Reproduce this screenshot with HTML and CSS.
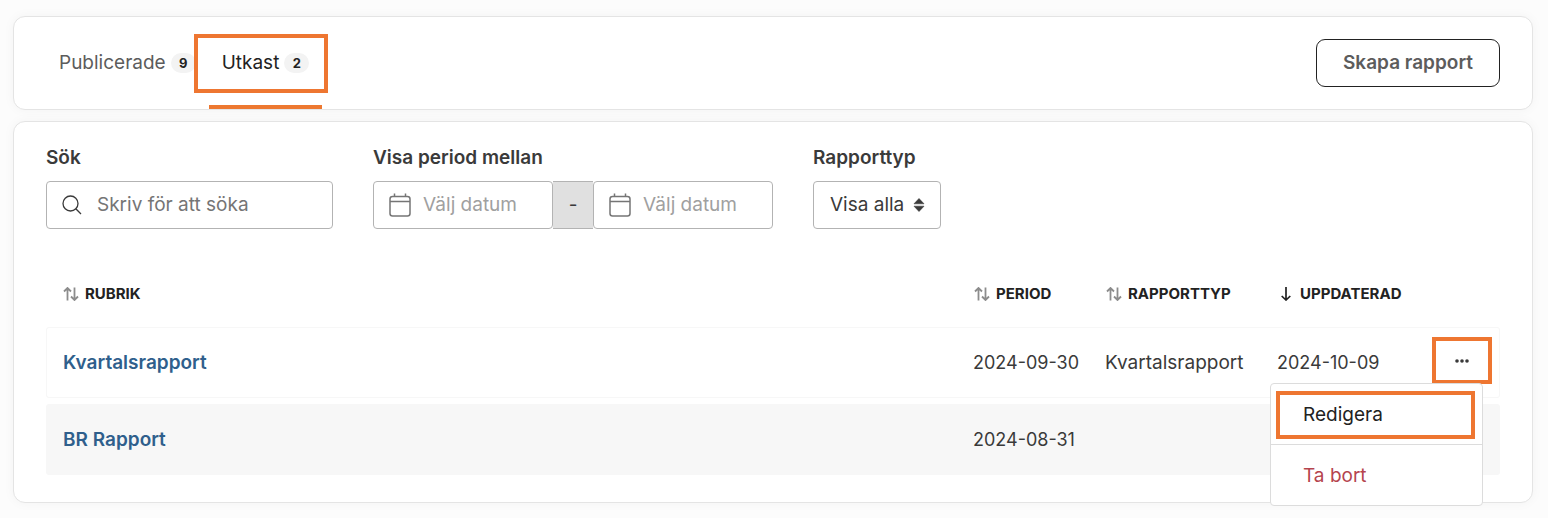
FILE: index.html
```html
<!DOCTYPE html>
<html lang="sv">
<head>
  <meta charset="UTF-8" />
  <meta name="viewport" content="width=device-width, initial-scale=1.0"/>
  <title>Rapporter</title>
  <link rel="stylesheet" href="styles.css">
</head>
<body>

<!-- Shared icons -->
<svg class="icon-defs" aria-hidden="true">
  <symbol id="icon-sort" viewBox="0 0 16 14">
    <path d="M4.5 13.5V1M1 4.5L4.5 1L8 4.5M11.5 0.500V13M8 9.500L11.5 13L15 9.500" fill="none" stroke="currentColor" stroke-width="1.800"/>
  </symbol>
  <symbol id="icon-calendar" viewBox="0 0 22 24">
    <path d="M3.500 3.500H18.500Q21 3.500 21 6V20.500Q21 23 18.500 23H3.500Q1 23 1 20.500V6Q1 3.500 3.500 3.500ZM1 8.500H21M5.500 0.500V4M16.500 0.500V4" fill="none" stroke="currentColor" stroke-width="1.500"/>
  </symbol>
</svg>

<header class="card toolbar">
  <nav class="tabs">
    <a class="tab" href="#publicerade">Publicerade <span class="badge">9</span></a>
    <a class="tab active" href="#utkast">Utkast <span class="badge">2</span></a>
  </nav>
  <button type="button" class="create-button">Skapa rapport</button>
</header>

<main class="card content">
  <form class="filters">
    <div class="field">
      <label for="search">Sök</label>
      <div class="input-box search-box">
        <svg class="search-icon" viewBox="0 0 20 20" aria-hidden="true">
          <circle cx="8.500" cy="8.500" r="7.500" fill="none" stroke="currentColor" stroke-width="1.300"/>
          <path d="M13.800 13.800L19 19" stroke="currentColor" stroke-width="1.300"/>
        </svg>
        <input type="text" id="search" placeholder="Skriv för att söka">
      </div>
    </div>

    <div class="field">
      <label for="date-from">Visa period mellan</label>
      <div class="date-range">
        <div class="input-box date-box">
          <svg class="calendar-icon" aria-hidden="true"><use href="#icon-calendar"/></svg>
          <input type="text" id="date-from" placeholder="Välj datum">
        </div>
        <span class="separator">-</span>
        <div class="input-box date-box">
          <svg class="calendar-icon" aria-hidden="true"><use href="#icon-calendar"/></svg>
          <input type="text" id="date-to" aria-label="Till datum" placeholder="Välj datum">
        </div>
      </div>
    </div>

    <div class="field">
      <label for="report-type">Rapporttyp</label>
      <div class="select-box">
        <select id="report-type">
          <option>Visa alla</option>
        </select>
        <svg class="select-icon" viewBox="0 0 12 14" aria-hidden="true">
          <path d="M6 0.500L11 5.800H1ZM6 13.500L1 8.200H11Z" fill="currentColor" stroke="currentColor" stroke-width="0.600" stroke-linejoin="round"/>
        </svg>
      </div>
    </div>
  </form>

  <table class="reports">
    <colgroup>
      <col>
      <col class="col-period">
      <col class="col-type">
      <col class="col-updated">
      <col class="col-actions">
    </colgroup>
    <thead>
      <tr>
        <th><button type="button" class="sort"><svg class="sort-icon" aria-hidden="true"><use href="#icon-sort"/></svg>Rubrik</button></th>
        <th><button type="button" class="sort"><svg class="sort-icon" aria-hidden="true"><use href="#icon-sort"/></svg>Period</button></th>
        <th><button type="button" class="sort"><svg class="sort-icon" aria-hidden="true"><use href="#icon-sort"/></svg>Rapporttyp</button></th>
        <th>
          <button type="button" class="sort sorted">
            <svg class="sort-icon" viewBox="0 0 16 14" aria-hidden="true">
              <path d="M8 0V13M3.700 9L8 13L12.300 9" fill="none" stroke="currentColor" stroke-width="1.700"/>
            </svg>Uppdaterad
          </button>
        </th>
        <td></td>
      </tr>
    </thead>
    <tbody>
      <tr>
        <td><a href="#kvartalsrapport">Kvartalsrapport</a></td>
        <td class="date">2024-09-30</td>
        <td>Kvartalsrapport</td>
        <td class="date">2024-10-09</td>
        <td class="actions">
          <div class="dropdown">
            <button type="button" class="more-button highlight" aria-label="Fler val">
              <svg class="dots-icon" viewBox="0 0 14 4" aria-hidden="true">
                <circle cx="2" cy="2" r="1.800"/>
                <circle cx="7" cy="2" r="1.800"/>
                <circle cx="12" cy="2" r="1.800"/>
              </svg>
            </button>
            <div class="menu">
              <button type="button" class="menu-item highlight">Redigera</button>
              <hr>
              <button type="button" class="menu-item danger">Ta bort</button>
            </div>
          </div>
        </td>
      </tr>
      <tr>
        <td><a href="#br-rapport">BR Rapport</a></td>
        <td class="date">2024-08-31</td>
        <td></td>
        <td></td>
        <td></td>
      </tr>
    </tbody>
  </table>
</main>

</body>
</html>
```
FILE: styles.css
```css
* {
  box-sizing: border-box;
}

body {
  margin: 0;
  padding: 16px 15px 15px 13px;
  font-family: Inter, sans-serif;
  font-size: 19px;
  line-height: 24px;
  color: #3a3a3a;
  background: #fcfcfc;
}

button, input, select {
  font: inherit;
  color: inherit;
}

button {
  background: none;
  border: none;
  cursor: pointer;
}

a {
  text-decoration: none;
}

.icon-defs {
  display: none;
}

.card {
  background: #fff;
  border: 1px solid #e4e4e4;
  border-radius: 12px;
  box-shadow: 0 0 12px rgba(0, 0, 0, 0.04);
}

/* Tabs */
.toolbar {
  display: flex;
  align-items: center;
  justify-content: space-between;
  height: 94px;
  padding: 0 32px;
}

.tabs {
  display: flex;
  align-self: stretch;
}

.tab {
  position: relative;
  display: flex;
  align-items: center;
  gap: 5px;
  padding: 0 13px;
  color: #5c5c5c;
}

.tab.active {
  color: #222;
  box-shadow: inset 0 -4px #ed7830;
}

.tab.active::after {
  content: "";
  position: absolute;
  top: 17px;
  right: -6px;
  bottom: 16px;
  left: -15px;
  border: 4px solid #ee7631;
}

.badge {
  min-width: 25px;
  border-radius: 10px;
  background: #f3f3f3;
  color: #222;
  font-size: 13px;
  font-weight: 700;
  line-height: 20px;
  text-align: center;
}

.create-button {
  height: 48px;
  padding: 0 26px;
  border: 1px solid #222;
  border-radius: 9px;
  color: #5c5c5c;
  font-weight: 600;
}

/* Filters */
.content {
  margin-top: 11px;
  padding: 24px 32px 21px;
}

.filters {
  display: flex;
  gap: 40px;
}

.field label {
  display: block;
  margin-bottom: 11px;
  font-weight: 600;
}

.input-box {
  display: flex;
  align-items: center;
  height: 48px;
  padding: 0 15px;
  border: 1px solid #b3b3b3;
  border-radius: 4px;
  background: #fff;
}

.input-box svg {
  flex: none;
}

.input-box input {
  flex: 1;
  min-width: 0;
  padding: 0;
  border: none;
  outline: none;
  background: none;
}

.search-box {
  width: 287px;
  gap: 15px;
}

.search-box input::placeholder {
  color: #757575;
}

.search-icon {
  width: 20px;
  height: 20px;
}

.date-range {
  display: flex;
}

.date-box {
  width: 180px;
  gap: 12px;
}

.date-box input::placeholder {
  color: #a0a0a0;
}

.calendar-icon {
  width: 22px;
  height: 24px;
  color: #757575;
}

.separator {
  width: 40px;
  border: solid #b3b3b3;
  border-width: 1px 0;
  background: #e0e0e0;
  line-height: 46px;
  text-align: center;
}

.select-box {
  position: relative;
}

.select-box select {
  appearance: none;
  height: 48px;
  padding: 0 35px 0 16px;
  border: 1px solid #b3b3b3;
  border-radius: 4px;
  background: #fff;
}

.select-icon {
  position: absolute;
  top: 17px;
  right: 16px;
  width: 12px;
  height: 14px;
  pointer-events: none;
}

/* Table */
.reports {
  width: 100%;
  margin-top: 39px;
  table-layout: fixed;
  border-collapse: separate;
  border-spacing: 0 6px;
}

.col-period {
  width: 132px;
}

.col-type {
  width: 172px;
}

.col-updated {
  width: 155px;
}

.col-actions {
  width: 84px;
}

.reports th {
  height: 47px;
  padding: 0 0 7px 17px;
  text-align: left;
}

.sort {
  display: flex;
  align-items: center;
  gap: 6px;
  padding: 0;
  color: #222;
  font-size: 15px;
  font-weight: 700;
  text-transform: uppercase;
}

.sort-icon {
  width: 16px;
  height: 14px;
  color: #8c8c8c;
}

.sorted .sort-icon {
  color: #222;
}

.reports tbody td {
  height: 71px;
  padding: 0 16px;
  border: solid #f7f7f7;
  border-width: 1px 0;
  white-space: nowrap;
}

.reports tbody td:first-child {
  border-left-width: 1px;
  border-radius: 3px 0 0 3px;
}

.reports tbody td:last-child {
  border-right-width: 1px;
  border-radius: 0 3px 3px 0;
}

.reports tbody tr:nth-child(even) td {
  background: #f7f7f7;
}

.reports tbody a {
  color: #2f5f8c;
  font-weight: 600;
}

.reports .date {
  font-size: 18px;
}

.reports tbody .actions {
  padding: 0 7px 4px 16px;
}

.highlight {
  border: 4px solid #ee7631;
}

.dropdown {
  position: relative;
}

.more-button {
  display: flex;
  align-items: center;
  justify-content: center;
  width: 100%;
  height: 47px;
}

.dots-icon {
  width: 14px;
  height: 4px;
  fill: #3a3a3a;
}

.menu {
  position: absolute;
  z-index: 1;
  top: 46px;
  right: 9px;
  width: 213px;
  padding: 7px 0 5px;
  border: 1px solid #dcdcdc;
  border-radius: 4px;
  background: #fff;
}

.menu-item {
  display: block;
  width: 100%;
  height: 48px;
  padding: 0 32px;
  text-align: left;
}

.menu-item.highlight {
  width: auto;
  min-width: 199px;
  margin-left: 5px;
  padding: 0 23px;
  color: #222;
}

.menu-item.danger {
  color: #b5444e;
}

.menu hr {
  margin: 5px 0 7px;
  border: none;
  border-top: 1px solid #dcdcdc;
}
```
